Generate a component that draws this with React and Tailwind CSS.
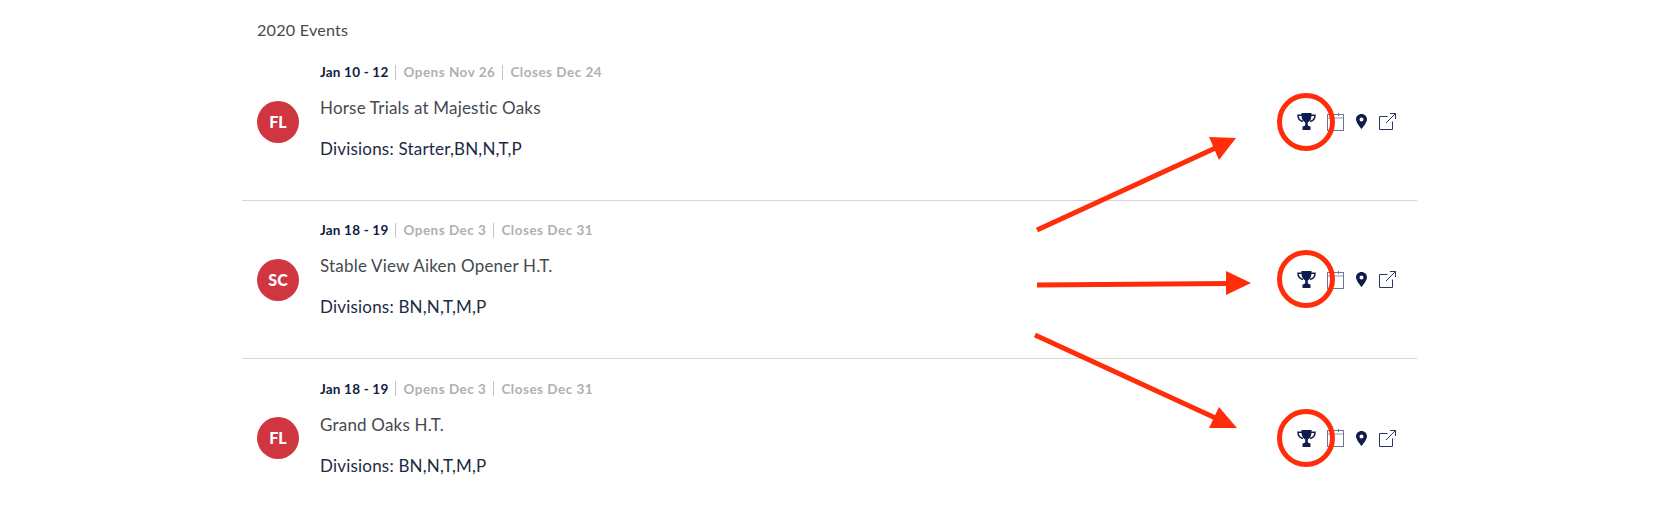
import React from "react";

const events = [
  { state: "FL", dates: "Jan 10 - 12", opens: "Opens Nov 26", closes: "Closes Dec 24", name: "Horse Trials at Majestic Oaks", divisions: "Divisions: Starter,BN,N,T,P" },
  { state: "SC", dates: "Jan 18 - 19", opens: "Opens Dec 3", closes: "Closes Dec 31", name: "Stable View Aiken Opener H.T.", divisions: "Divisions: BN,N,T,M,P" },
  { state: "FL", dates: "Jan 18 - 19", opens: "Opens Dec 3", closes: "Closes Dec 31", name: "Grand Oaks H.T.", divisions: "Divisions: BN,N,T,M,P" },
];

function Trophy() {
  return (
    <svg width="19" height="17" viewBox="0 0 19 17" className="shrink-0">
      <path d="M4.500 0h10c0 0 .3 4.500-1 6.800-.9 1.500-2 2.300-2.700 2.700V12c0 .6.900 1.100 2.700 1.500V17H5.500v-3.500c1.800-.4 2.700-.9 2.700-1.500V9.500C7.500 9.100 6.400 8.300 5.500 6.800 4.200 4.500 4.500 0 4.500 0z" fill="#0f1c4d" />
      <path d="M5 2.200H1c0 3.300 1.500 5.500 5 6.300M14 2.200h4c0 3.300-1.500 5.500-5 6.300" fill="none" stroke="#0f1c4d" strokeWidth="1.500" />
    </svg>
  );
}

function Calendar() {
  return (
    <svg width="17" height="18" viewBox="0 0 17 18" className="shrink-0">
      <rect x="0.5" y="1.500" width="16" height="16" fill="none" stroke="#6f7796" />
      <rect x="1" y="4" width="15" height="2" fill="#c9cbd3" />
      <path d="M11.500 0v3" stroke="#6f7796" />
    </svg>
  );
}

function Pin() {
  return (
    <svg width="11" height="15" viewBox="0 0 11 15" className="shrink-0">
      <path fillRule="evenodd" d="M5.500 0C2.400 0 0 2.300 0 5.300 0 9 5.500 15 5.500 15S11 9 11 5.300C11 2.300 8.600 0 5.500 0zm0 3.400a2 2 0 110 4 2 2 0 010-4z" fill="#0f1c4d" />
    </svg>
  );
}

function External() {
  return (
    <svg width="17" height="17" viewBox="0 0 17 17" className="shrink-0" fill="none" stroke="#2b3763">
      <path d="M8.500 3.500H.5v13h13v-8" />
      <path d="M7 10L16.500.5M11 .5h5.500V6" />
    </svg>
  );
}

function EventRow({ ev, last }) {
  return (
    <div className={`flex items-center h-[158px] pl-[15px] pr-[21px] ${last ? "" : "border-b border-[#d6d6d6]"}`}>
      <div className="w-[42px] h-[42px] rounded-full bg-[#cf3640] text-white font-black text-[16px] flex items-center justify-center shrink-0">
        {ev.state}
      </div>
      <div className="ml-[21px] flex-1 min-w-0 pb-[20px]">
        <div className="flex items-center text-[13.500px] font-bold leading-[16px] tracking-[0.2px] text-[#b0b0b0]">
          <span className="text-[#10203f]">{ev.dates}</span>
          <span className="w-px h-[15px] bg-[#c4c4c4] mx-[7px]" />
          <span className="tracking-[0.5px]">{ev.opens}</span>
          <span className="w-px h-[15px] bg-[#c4c4c4] mx-[7px]" />
          <span className="tracking-[0.5px]">{ev.closes}</span>
        </div>
        <div className="mt-[18px] text-[17px] leading-[20px] text-[#454a50] tracking-[0.2px]">{ev.name}</div>
        <div className="mt-[21px] text-[17px] leading-[20px] text-[#1c2a45] tracking-[0.2px]">{ev.divisions}</div>
      </div>
      <div className="flex items-center">
        <Trophy />
        <span className="ml-[11px]"><Calendar /></span>
        <span className="ml-[12px]"><Pin /></span>
        <span className="ml-[12px]"><External /></span>
      </div>
    </div>
  );
}

export default function App() {
  return (
    <div className="relative w-full h-[514px] bg-white overflow-hidden font-['Lato',sans-serif]">
      <div className="ml-[242px] w-[1175px]">
        <div className="pl-[15px] pt-[20px] h-[43px] text-[16.200px] leading-[20px] tracking-[0.2px] text-[#454a50]">2020 Events</div>
        {events.map((ev, i) => (
          <EventRow key={i} ev={ev} last={i === events.length - 1} />
        ))}
      </div>

      {/* red annotations drawn over the page */}
      <svg className="absolute inset-0 pointer-events-none" width="1663" height="514" viewBox="0 0 1663 514">
        <g fill="none" stroke="#ff2d0a" strokeWidth="5">
          <circle cx="1306" cy="122" r="26.500" />
          <circle cx="1306" cy="279" r="26.500" />
          <circle cx="1306" cy="438" r="26.500" />
          <path d="M1037 230L1222 145" />
          <path d="M1037 285L1230 283.500" />
          <path d="M1035 335L1222 421" />
        </g>
        <g fill="#ff2d0a">
          <path d="M1236 138L1209 137L1219 160z" />
          <path d="M1251 283L1226 271L1226 295z" />
          <path d="M1237 428L1219 407L1209 428z" />
        </g>
      </svg>
    </div>
  );
}
